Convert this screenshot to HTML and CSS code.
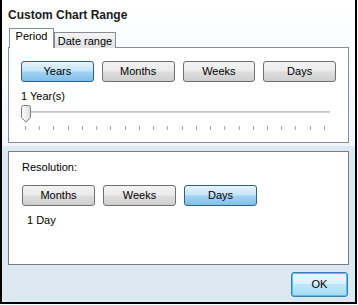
FILE: index.html
```html
<!DOCTYPE html>
<html lang="en">
<head>
  <meta charset="UTF-8" />
  <title>Custom Chart Range</title>
  <link rel="stylesheet" href="styles.css">
</head>
<body>

  <div class="window">
    <div class="top">
      <div class="title">Custom Chart Range</div>

      <div class="tabs">
        <div class="tab active">Period</div>
        <div class="tab inactive">Date range</div>
      </div>

      <div class="panel period">
        <div class="btn-row">
          <button class="btn selected">Years</button>
          <button class="btn">Months</button>
          <button class="btn">Weeks</button>
          <button class="btn">Days</button>
        </div>
        <div class="value-label">1 Year(s)</div>
        <div class="slider">
          <div class="track"></div>
          <div class="ticks">
            <i></i><i></i><i></i><i></i><i></i><i></i><i></i><i></i><i></i><i></i><i></i>
            <i></i><i></i><i></i><i></i><i></i><i></i><i></i><i></i><i></i><i></i><i></i>
          </div>
          <svg class="thumb" width="10" height="18" viewBox="0 0 10 18">
            <defs>
              <linearGradient id="thumbFill" x1="0" y1="0" x2="1" y2="0">
                <stop offset="0" stop-color="#ffffff" />
                <stop offset="1" stop-color="#dcdcdc" />
              </linearGradient>
            </defs>
            <path d="M0.5,2.5 Q0.5,0.5 2.5,0.5 H7.5 Q9.5,0.5 9.5,2.5 V12.5 L5,17.2 L0.5,12.5 Z"
                  fill="url(#thumbFill)" stroke="#7c7c7c" stroke-width="1" />
          </svg>
        </div>
      </div>
    </div>

    <div class="panel resolution">
      <div class="res-label">Resolution:</div>
      <div class="btn-row">
        <button class="btn">Months</button>
        <button class="btn">Weeks</button>
        <button class="btn selected">Days</button>
      </div>
      <div class="day-label">1 Day</div>
    </div>

    <div class="footer">
      <button class="btn ok">OK</button>
    </div>
  </div>

</body>
</html>
```

FILE: styles.css
```css
* {
  box-sizing: border-box;
}

body {
  margin: 0;
  font-family: 'Liberation Sans', Arial, sans-serif;
  font-size: 11px;
  color: #000;
  background: #fff;
}

.window {
  width: 357px;
  height: 304px;
  border: 2px solid #000;
  border-top: 0;
  background: #dce8f2;
  display: flex;
  flex-direction: column;
}

.top {
  background: linear-gradient(#ffffff, #f2f6fa);
  padding: 8px 6px 3px;
}

.title {
  font-size: 12px;
  font-weight: bold;
  line-height: 15px;
  color: #1a1a1a;
}

.tabs {
  display: flex;
  align-items: flex-end;
  height: 20px;
  margin-top: 5px;
  padding-left: 1px;
  position: relative;
  z-index: 1;
}

.tab {
  height: 16px;
  border: 1px solid #898c95;
  border-bottom: 0;
  padding-top: 2px;
  line-height: 13px;
  text-align: center;
  background: linear-gradient(#f4f4f4, #e2e2e2);
}

.tab.active {
  width: 45px;
  height: 20px;
  padding-top: 1px;
  background: #fff;
}

.tab.inactive {
  width: 62px;
}

.panel {
  background: #fff;
  border: 1px solid #898c95;
}

.period {
  margin-top: -1px;
  height: 96px;
  padding: 13px 12px 0;
}

.resolution {
  margin: 5px 6px 0;
  height: 114px;
  padding: 9px 13px 0;
  border-color: #7a7d84;
}

.btn-row {
  display: flex;
  gap: 8px;
}

.btn {
  width: 73px;
  height: 21px;
  padding: 0;
  font-family: inherit;
  font-size: 11px;
  line-height: 19px;
  color: #000;
  border: 1px solid #707070;
  border-radius: 3px;
  background: linear-gradient(#f3f3f3 0%, #ebebeb 45%, #dddddd 55%, #cfcfcf 100%);
}

.btn.selected {
  border-color: #2c628b;
  background: linear-gradient(#e8f4fc 0%, #c6e4f7 45%, #a2d2f1 55%, #80bfe7 100%);
}

.value-label {
  margin-top: 8px;
  line-height: 13px;
}

.slider {
  position: relative;
  width: 309px;
  height: 26px;
  margin-top: 2px;
  padding-top: 6px;
}

.track {
  height: 2px;
  background: #d3d3d3;
  border-top: 1px solid #c4c4c4;
}

.ticks {
  display: flex;
  justify-content: space-between;
  width: 300px;
  margin: 13px 0 0 4px;
}

.ticks i {
  width: 1px;
  height: 4px;
  background: #a6a6a6;
}

.thumb {
  position: absolute;
  left: 0;
  top: 0;
}

.res-label {
  line-height: 13px;
}

.resolution .btn-row {
  margin-top: 11px;
}

.day-label {
  margin-top: 8px;
  padding-left: 5px;
  line-height: 13px;
}

.footer {
  display: flex;
  justify-content: flex-end;
  padding: 7px 7px 0;
}

.btn.ok {
  width: 57px;
  height: 25px;
  line-height: 23px;
  border-color: #3c7fb1;
  box-shadow: inset 0 0 0 1px #4cc4f4;
  background: linear-gradient(#eaf6fd 0%, #d9f0fc 50%, #bee6fd 50%, #a9dcf6 100%);
}
```
